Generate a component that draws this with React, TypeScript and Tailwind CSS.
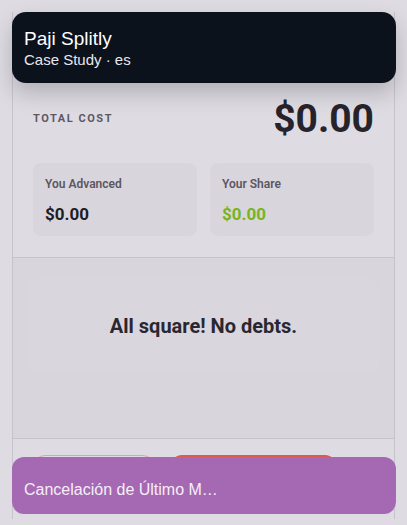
export default function App() {
  return (
    <div className="relative min-h-[525px] w-[407px] overflow-hidden bg-[#dedbe3] px-3 pt-3 font-['Roboto',sans-serif]">
      <div className="border-x border-[#c7c3cb]">
        <section className="px-5 pt-[84px] pb-[21px]">
          <div className="flex items-center justify-between">
            <span className="text-[11px] font-bold uppercase tracking-[0.14em] text-[#5d5963]">
              Total Cost
            </span>
            <span className="text-[39px] font-bold leading-[46px] text-[#26232b]">$0.00</span>
          </div>
          <div className="mt-[21px] grid grid-cols-2 gap-[13px]">
            <Tile label="You Advanced" value="$0.00" valueClass="text-[#1f1d23]" />
            <Tile label="Your Share" value="$0.00" valueClass="text-[#78b51c]" />
          </div>
        </section>

        <section className="border-y border-[#c7c3cb] bg-[#d8d5dc] px-[15px] pt-5 pb-[65px]">
          <div className="flex h-[95px] items-center justify-center rounded-xl bg-[#d9d6dd]">
            <span className="text-[20px] font-bold text-[#2a2730]">All square! No debts.</span>
          </div>
        </section>

        <section className="flex gap-[15px] px-5 pt-4 pb-6">
          <div className="h-10 w-[122px] rounded-xl border border-[#e8a0a0]" />
          <div className="h-10 w-[167px] rounded-xl bg-[#dc5a52]" />
        </section>
      </div>

      <header className="absolute left-3 right-[11px] top-3 rounded-[14px] bg-[#0c121c] px-3 pt-[15px] pb-[14px] font-['Liberation_Sans',Arial,sans-serif] text-white shadow-[0_10px_22px_rgba(0,0,0,0.2)]">
        <div className="text-[19px] leading-[23px]">Paji Splitly</div>
        <div className="text-[15px] leading-[19px] text-[#e6e8ec]">Case Study · es</div>
      </header>

      <div className="absolute left-3 right-[11px] top-[457px] h-[57px] rounded-[12px] bg-[#a569b3] px-3 pt-[23px] font-['Liberation_Sans',Arial,sans-serif] text-[16px] leading-5 text-[#f5eef7]">
        Cancelación de Último M…
      </div>
    </div>
  );
}

function Tile({ label, value, valueClass }: { label: string; value: string; valueClass: string }) {
  return (
    <div className="h-[73px] rounded-lg bg-[#d9d5dd] px-3 pt-[13px]">
      <div className="text-[12px] font-semibold leading-4 text-[#5b5761]">{label}</div>
      <div className={`mt-[10px] text-[17px] font-bold leading-6 ${valueClass}`}>{value}</div>
    </div>
  );
}
